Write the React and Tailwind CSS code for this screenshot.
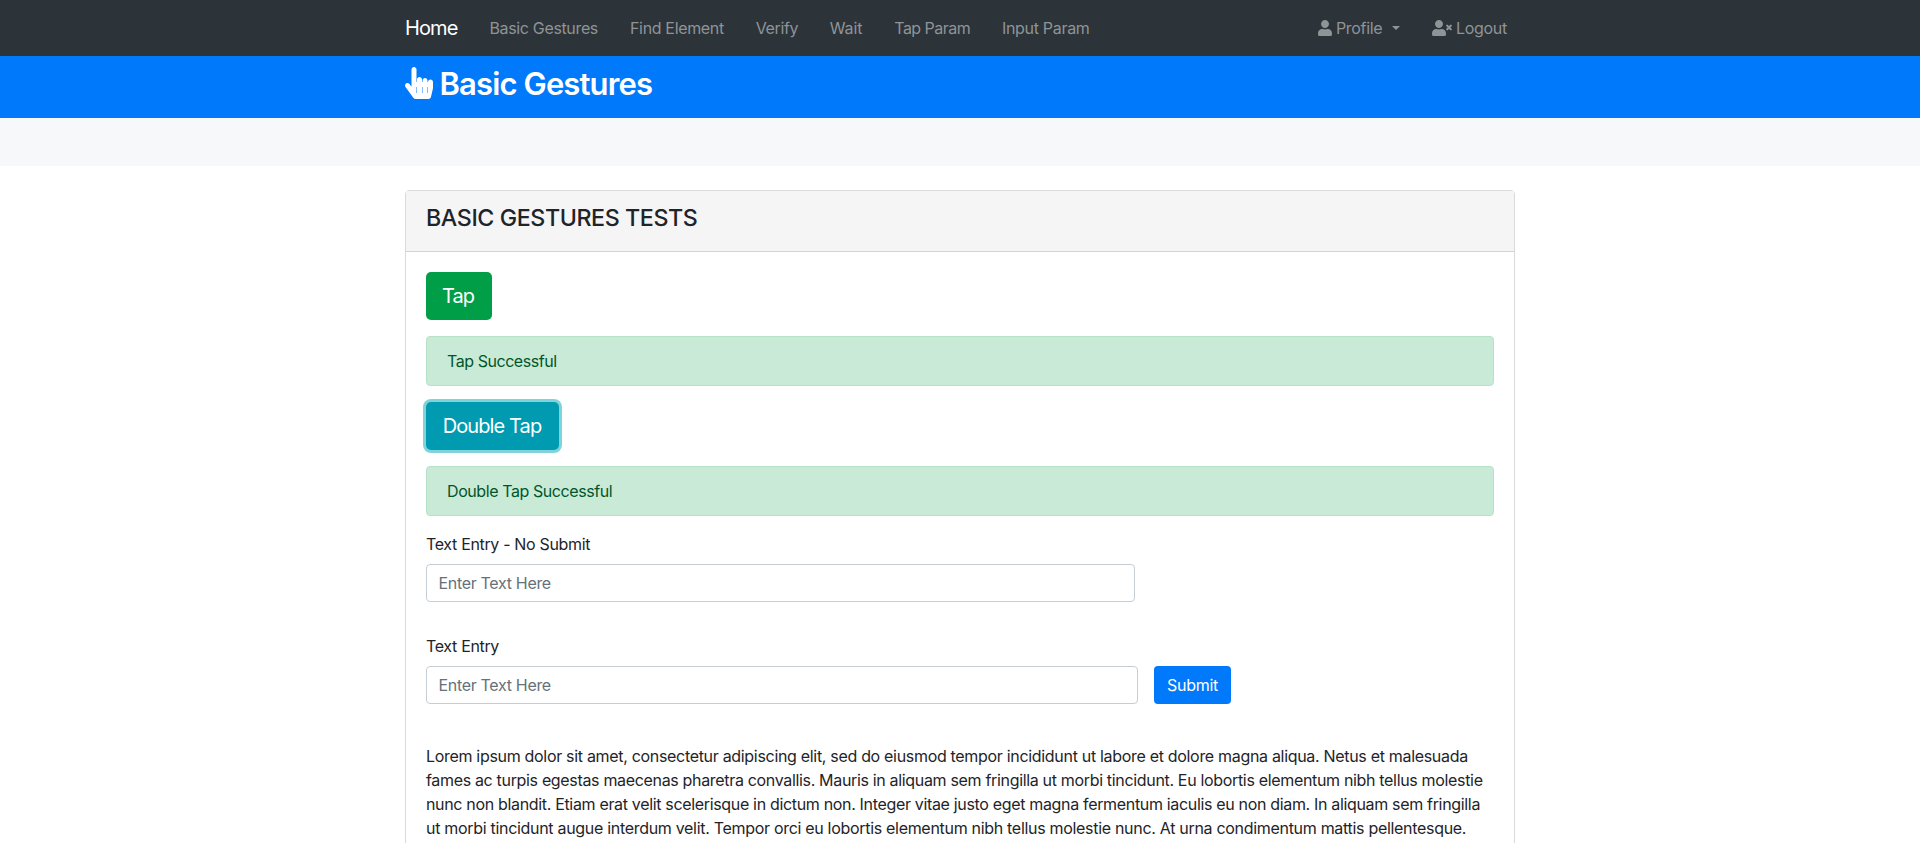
import React from "react";
import { FaHandPointer, FaUser, FaUserTimes } from "react-icons/fa";

const navItems = [
  { label: "Basic Gestures", cls: "w-[108.5px] tracking-[-0.35px]" },
  { label: "Find Element", cls: "w-[93.8px] tracking-[-0.34px]" },
  { label: "Verify", cls: "w-[42px] tracking-[-0.4px]" },
  { label: "Wait", cls: "w-[32.5px] tracking-[-0.15px]" },
  { label: "Tap Param", cls: "w-[75.6px] tracking-[-0.54px]" },
  { label: "Input Param", cls: "w-[88px] tracking-[-0.3px]" },
];

const lorem = [
  {
    text: "Lorem ipsum dolor sit amet, consectetur adipiscing elit, sed do eiusmod tempor incididunt ut labore et dolore magna aliqua. Netus et malesuada",
    cls: "tracking-[-0.313px]",
  },
  {
    text: "fames ac turpis egestas maecenas pharetra convallis. Mauris in aliquam sem fringilla ut morbi tincidunt. Eu lobortis elementum nibh tellus molestie",
    cls: "tracking-[-0.33px]",
  },
  {
    text: "nunc non blandit. Etiam erat velit scelerisque in dictum non. Integer vitae justo eget magna fermentum iaculis eu non diam. In aliquam sem fringilla",
    cls: "tracking-[-0.332px]",
  },
  {
    text: "ut morbi tincidunt augue interdum velit. Tempor orci eu lobortis elementum nibh tellus molestie nunc. At urna condimentum mattis pellentesque.",
    cls: "tracking-[-0.305px]",
  },
];

function Alert({ children, className }) {
  return (
    <div
      className={`mt-4 flex h-[50px] items-center rounded border border-[#b6e2c8] bg-[#c9ead7] px-5 text-[#00562a] ${className}`}
    >
      {children}
    </div>
  );
}

function TextInput({ className }) {
  return (
    <input
      type="text"
      placeholder="Enter Text Here"
      className={`block h-[38px] rounded border border-[#c6ced5] bg-white px-[11.5px] tracking-[-0.32px] placeholder:text-[#66717a] placeholder:opacity-100 ${className}`}
    />
  );
}

export default function App() {
  return (
    <div className="h-[843px] overflow-hidden bg-white font-['Inter','Liberation_Sans',sans-serif] text-base leading-6 font-[430] text-[#1e2428]">
      <nav className="h-14 bg-[#2c3339]">
        <div className="mx-auto flex h-full w-[1110px] items-center whitespace-nowrap text-[#8f9497]">
          <a className="w-[53px] text-[20px] tracking-[-0.9px] text-white">Home</a>
          <ul className="ml-[31.5px] flex gap-8">
            {navItems.map((item) => (
              <li key={item.label} className={item.cls}>
                {item.label}
              </li>
            ))}
          </ul>
          <ul className="ml-auto flex gap-8 pr-2">
            <li className="flex items-center tracking-[-0.3px]">
              <FaUser className="mr-1 h-4 w-[14px]" />
              <span>Profile</span>
              <span className="ml-[9.5px] border-x-[4.8px] border-t-[4.8px] border-x-transparent border-t-[#8f9497]" />
            </li>
            <li className="flex items-center">
              <FaUserTimes className="mr-1 h-4 w-5" />
              <span className="tracking-[-0.27px]">Logout</span>
            </li>
          </ul>
        </div>
      </nav>

      <header className="h-[62px] bg-[#0079fb] pt-2">
        <h1 className="mx-auto flex w-[1110px] items-start text-[31px] leading-[38px] font-[560] tracking-[-0.87px] text-white">
          <FaHandPointer className="mt-[3px] mr-[6.5px] h-8 w-7" />
          <span className="pt-px">Basic Gestures</span>
        </h1>
      </header>

      <div className="h-12 bg-[#f7f8fa]" />

      <main className="mx-auto mt-6 w-[1110px] rounded border border-[#d9dadb]">
        <div className="h-[61px] border-b border-[#d2d3d4] bg-[#f5f5f6] px-5 pt-3">
          <h2 className="text-[23.25px] leading-[29px] font-[540] tracking-[-0.42px]">
            BASIC GESTURES TESTS
          </h2>
        </div>
        <div className="p-5">
          <button className="block h-12 w-[66px] rounded-[5px] bg-[#009e47] pr-0.5 text-[20px] tracking-[-0.95px] text-white">
            Tap
          </button>
          <Alert className="tracking-[-0.45px]">Tap Successful</Alert>
          <button className="mt-4 block h-12 w-[133px] rounded-[5px] bg-[#009bb0] pr-px text-[20px] tracking-[-0.89px] text-white ring-3 ring-[#80d3da]">
            Double Tap
          </button>
          <Alert className="tracking-[-0.42px]">Double Tap Successful</Alert>

          <label className="mt-4 mb-2 block tracking-[-0.34px]">Text Entry - No Submit</label>
          <TextInput className="w-[709px]" />

          <label className="mt-8 mb-2 block tracking-[-0.34px]">Text Entry</label>
          <div className="flex gap-4">
            <TextInput className="w-[712px]" />
            <button className="h-[38px] w-[77px] rounded bg-[#0079fb] tracking-[-0.28px] text-white">Submit</button>
          </div>

          <p className="mt-10 whitespace-nowrap">
            {lorem.map((line) => (
              <span key={line.text} className={`block ${line.cls}`}>
                {line.text}
              </span>
            ))}
          </p>
        </div>
      </main>
    </div>
  );
}
